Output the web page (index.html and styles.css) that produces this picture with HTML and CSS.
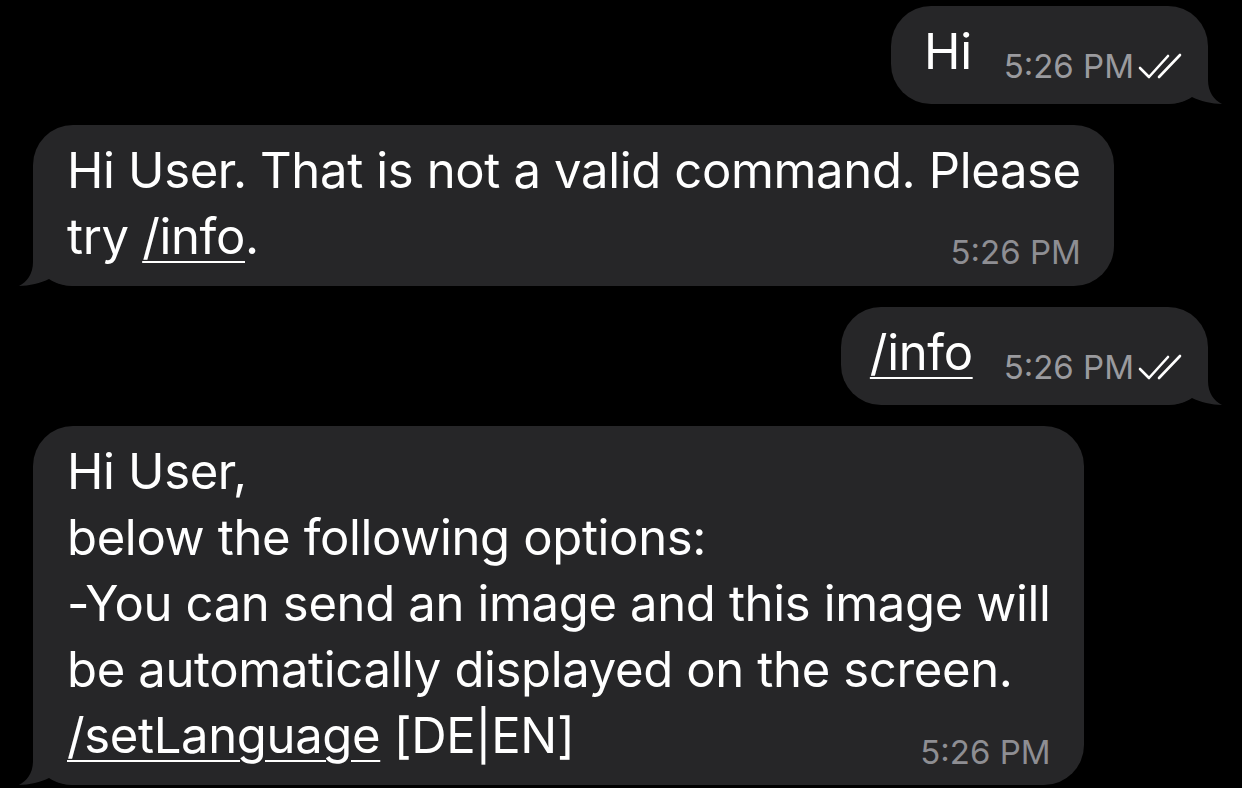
FILE: index.html
```html
<!DOCTYPE html>
<html>
<head>
<meta charset="utf-8">
<link rel="stylesheet" href="styles.css">
</head>
<body>
<div class="chat">
  <div class="row out">
    <div class="bubble out-bubble">
      <span class="text">Hi</span>
      <span class="meta"><span class="time">5:26 PM</span><svg class="checks" viewBox="0 0 46 28"><path d="M3 16 L12 25 L31 4 M22 25 L43 3" fill="none" stroke="#fff" stroke-width="2.6" stroke-linecap="round" stroke-linejoin="round"/></svg></span>
      <svg class="tail tail-right" viewBox="0 0 58 54"><path d="M42 0 L42 30 C42 42 48 50 56 54 C46 54 34 51 26 47 C20 51 12 54 2 54 L2 0 Z" fill="#262628"/></svg>
    </div>
  </div>

  <div class="row in">
    <div class="bubble in-bubble">
      <div class="text">Hi User. That is not a valid command. Please<br>try <span class="link">/info</span>.</div>
      <span class="time in-time t2">5:26 PM</span>
      <svg class="tail tail-left" viewBox="0 0 58 54"><path d="M16 0 L16 30 C16 42 10 50 2 54 C12 54 24 51 32 47 C38 51 46 54 56 54 L56 0 Z" fill="#262628"/></svg>
    </div>
  </div>

  <div class="row out">
    <div class="bubble out-bubble cmd">
      <span class="text"><span class="link">/info</span></span>
      <span class="meta"><span class="time">5:26 PM</span><svg class="checks" viewBox="0 0 46 28"><path d="M3 16 L12 25 L31 4 M22 25 L43 3" fill="none" stroke="#fff" stroke-width="2.6" stroke-linecap="round" stroke-linejoin="round"/></svg></span>
      <svg class="tail tail-right" viewBox="0 0 58 54"><path d="M42 0 L42 30 C42 42 48 50 56 54 C46 54 34 51 26 47 C20 51 12 54 2 54 L2 0 Z" fill="#262628"/></svg>
    </div>
  </div>

  <div class="row in">
    <div class="bubble in-bubble">
      <div class="text">Hi User,<br>below the following options:<br>-You can send an image and this image will<br>be automatically displayed on the screen.<br><span class="link">/setLanguage</span> [DE|EN]</div>
      <span class="time in-time">5:26 PM</span>
      <svg class="tail tail-left" viewBox="0 0 58 54"><path d="M16 0 L16 30 C16 42 10 50 2 54 C12 54 24 51 32 47 C38 51 46 54 56 54 L56 0 Z" fill="#262628"/></svg>
    </div>
  </div>
</div>
</body>
</html>
```

FILE: styles.css
```css
html, body {
  margin: 0;
  padding: 0;
  background: #000;
  overflow: hidden;
}

body {
  width: 1242px;
  height: 788px;
  font-family: Inter, "Noto Sans", "Liberation Sans", sans-serif;
  color: #fff;
}

.chat {
  display: flex;
  flex-direction: column;
  gap: 21px;
  padding: 6px 34px 0 33px;
}

.row {
  display: flex;
}

.row.out {
  justify-content: flex-end;
}

.row.in {
  justify-content: flex-start;
}

.bubble {
  position: relative;
  background: #262628;
  border-radius: 40px;
}

.text {
  position: relative;
  z-index: 1;
  font-size: 49px;
  letter-spacing: -0.35px;
  line-height: 66px;
  white-space: nowrap;
}

.link {
  text-decoration: underline;
  text-decoration-thickness: 2px;
  text-underline-offset: 7px;
}

.out-bubble {
  display: flex;
  align-items: flex-end;
  gap: 32px;
  padding: 13px 25px 19px 33px;
}

.out-bubble.cmd {
  gap: 31px;
  padding-left: 29px;
}

.meta {
  position: relative;
  z-index: 1;
  display: flex;
  align-items: flex-end;
  margin-bottom: 2px;
  flex: none;
}

.time {
  position: relative;
  z-index: 1;
  font-size: 33px;
  line-height: 33px;
  color: #9a9a9e;
  white-space: nowrap;
}

.checks {
  display: block;
  flex: none;
  width: 46px;
  height: 28px;
  margin-left: 3px;
  margin-bottom: 3px;
}

.in-bubble {
  display: grid;
  padding: 13px 33px 16px 34px;
}

.in-bubble .text,
.in-bubble .in-time {
  grid-area: 1 / 1;
}

.in-time {
  align-self: end;
  justify-self: end;
  color: #8e8e93;
  margin-bottom: 0;
}

.in-time.t2 {
  margin-bottom: 1px;
}

.tail {
  position: absolute;
  z-index: 0;
  bottom: 0;
  display: block;
  width: 58px;
  height: 54px;
}

.tail-right {
  right: -16px;
}

.tail-left {
  left: -16px;
}
```
